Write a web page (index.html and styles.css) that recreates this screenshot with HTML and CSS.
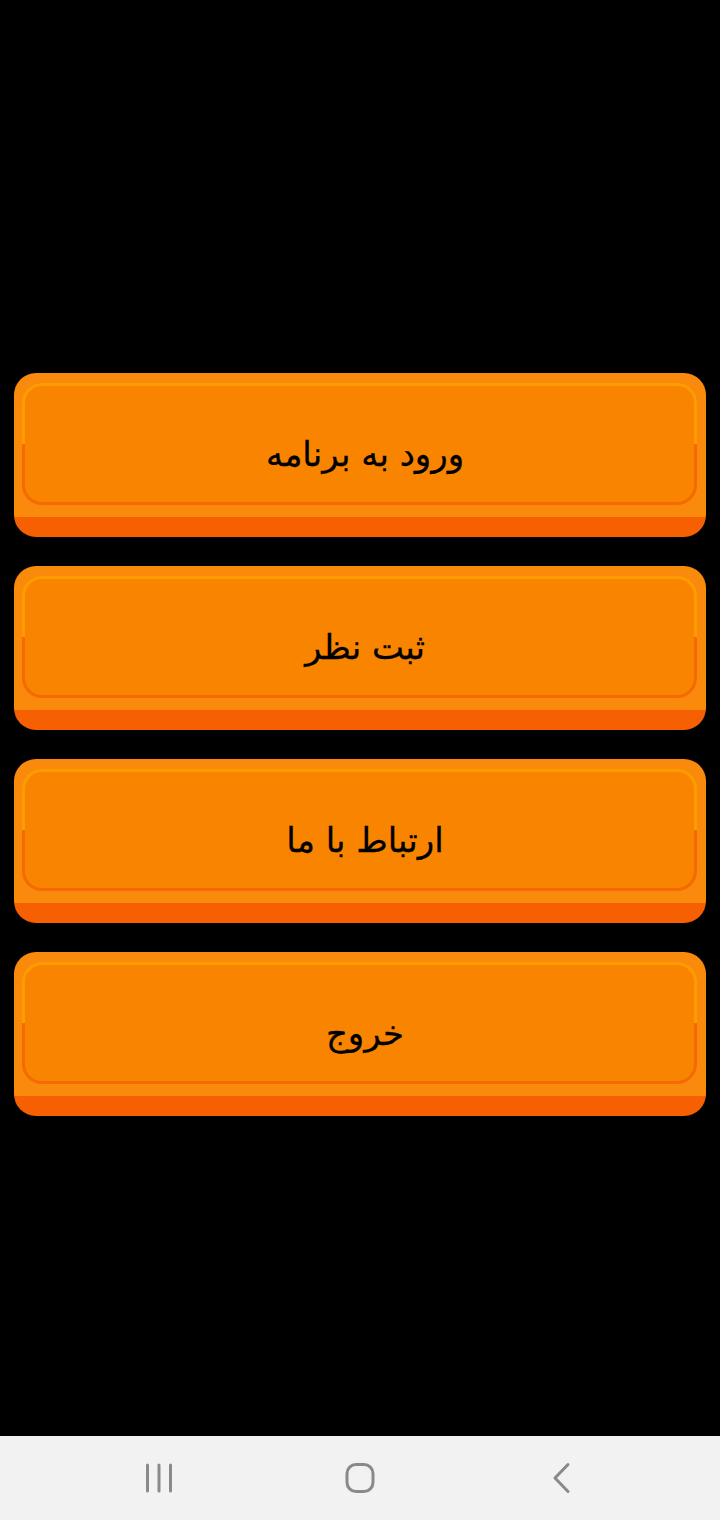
FILE: index.html
```html
<!DOCTYPE html>
<html lang="fa" dir="rtl">
<head>
<meta charset="utf-8">
<link rel="stylesheet" href="styles.css">
</head>
<body>
<div class="screen">
  <main class="menu">
    <div class="btn"><div class="btn-inner"><span class="label">ورود به برنامه</span></div></div>
    <div class="btn"><div class="btn-inner"><span class="label">ثبت نظر</span></div></div>
    <div class="btn"><div class="btn-inner"><span class="label">ارتباط با ما</span></div></div>
    <div class="btn"><div class="btn-inner"><span class="label">خروج</span></div></div>
  </main>
  <nav class="navbar" dir="ltr">
    <svg class="nav-icon" width="30" height="32" viewBox="0 0 30 32">
      <path d="M3.5 3v26M15 3v26M26.5 3v26" stroke="#8a8a8a" stroke-width="3" stroke-linecap="round" fill="none"/>
    </svg>
    <svg class="nav-icon" width="32" height="32" viewBox="0 0 32 32">
      <rect x="3" y="2.5" width="26" height="27" rx="9" stroke="#8a8a8a" stroke-width="3" fill="none"/>
    </svg>
    <svg class="nav-icon" width="22" height="32" viewBox="0 0 22 32">
      <path d="M18 2.5L5 16l13 13.5" stroke="#8a8a8a" stroke-width="3" stroke-linecap="round" stroke-linejoin="round" fill="none"/>
    </svg>
  </nav>
</div>
</body>
</html>
```

FILE: styles.css
```css
* { box-sizing: border-box; }
html, body {
  margin: 0;
  padding: 0;
  background: #000;
}
.screen {
  width: 720px;
  height: 1520px;
  display: flex;
  flex-direction: column;
  background: #000;
}
.menu {
  flex: 1;
  display: flex;
  flex-direction: column;
  gap: 29px;
  padding: 373px 14px 0 14px;
}
.btn {
  height: 164px;
  border-radius: 22px;
  background: linear-gradient(to bottom, #fa8a0c 0, #fa8a0c 144px, #f75f03 144px);
  padding: 10px 9px 0 8px;
}
.btn-inner {
  height: 122px;
  border-radius: 20px;
  border: 3px solid transparent;
  background:
    linear-gradient(#f98400, #f98400) padding-box,
    linear-gradient(to bottom, #fd9b00 50%, #f66a03 50%) border-box;
  display: flex;
  align-items: center;
  justify-content: center;
  padding-top: 20px;
  padding-left: 11px;
}
.label {
  font-family: "DejaVu Sans", "Noto Sans", sans-serif;
  font-size: 34px;
  color: #000;
  line-height: 1;
  -webkit-text-stroke: 0.3px #000;
}
.navbar {
  height: 84px;
  background: #f2f2f2;
  position: relative;
}
.nav-icon {
  position: absolute;
  top: 26px;
}
.nav-icon:nth-child(1) { left: 144px; }
.nav-icon:nth-child(2) { left: 344px; }
.nav-icon:nth-child(3) { left: 550px; }
```
